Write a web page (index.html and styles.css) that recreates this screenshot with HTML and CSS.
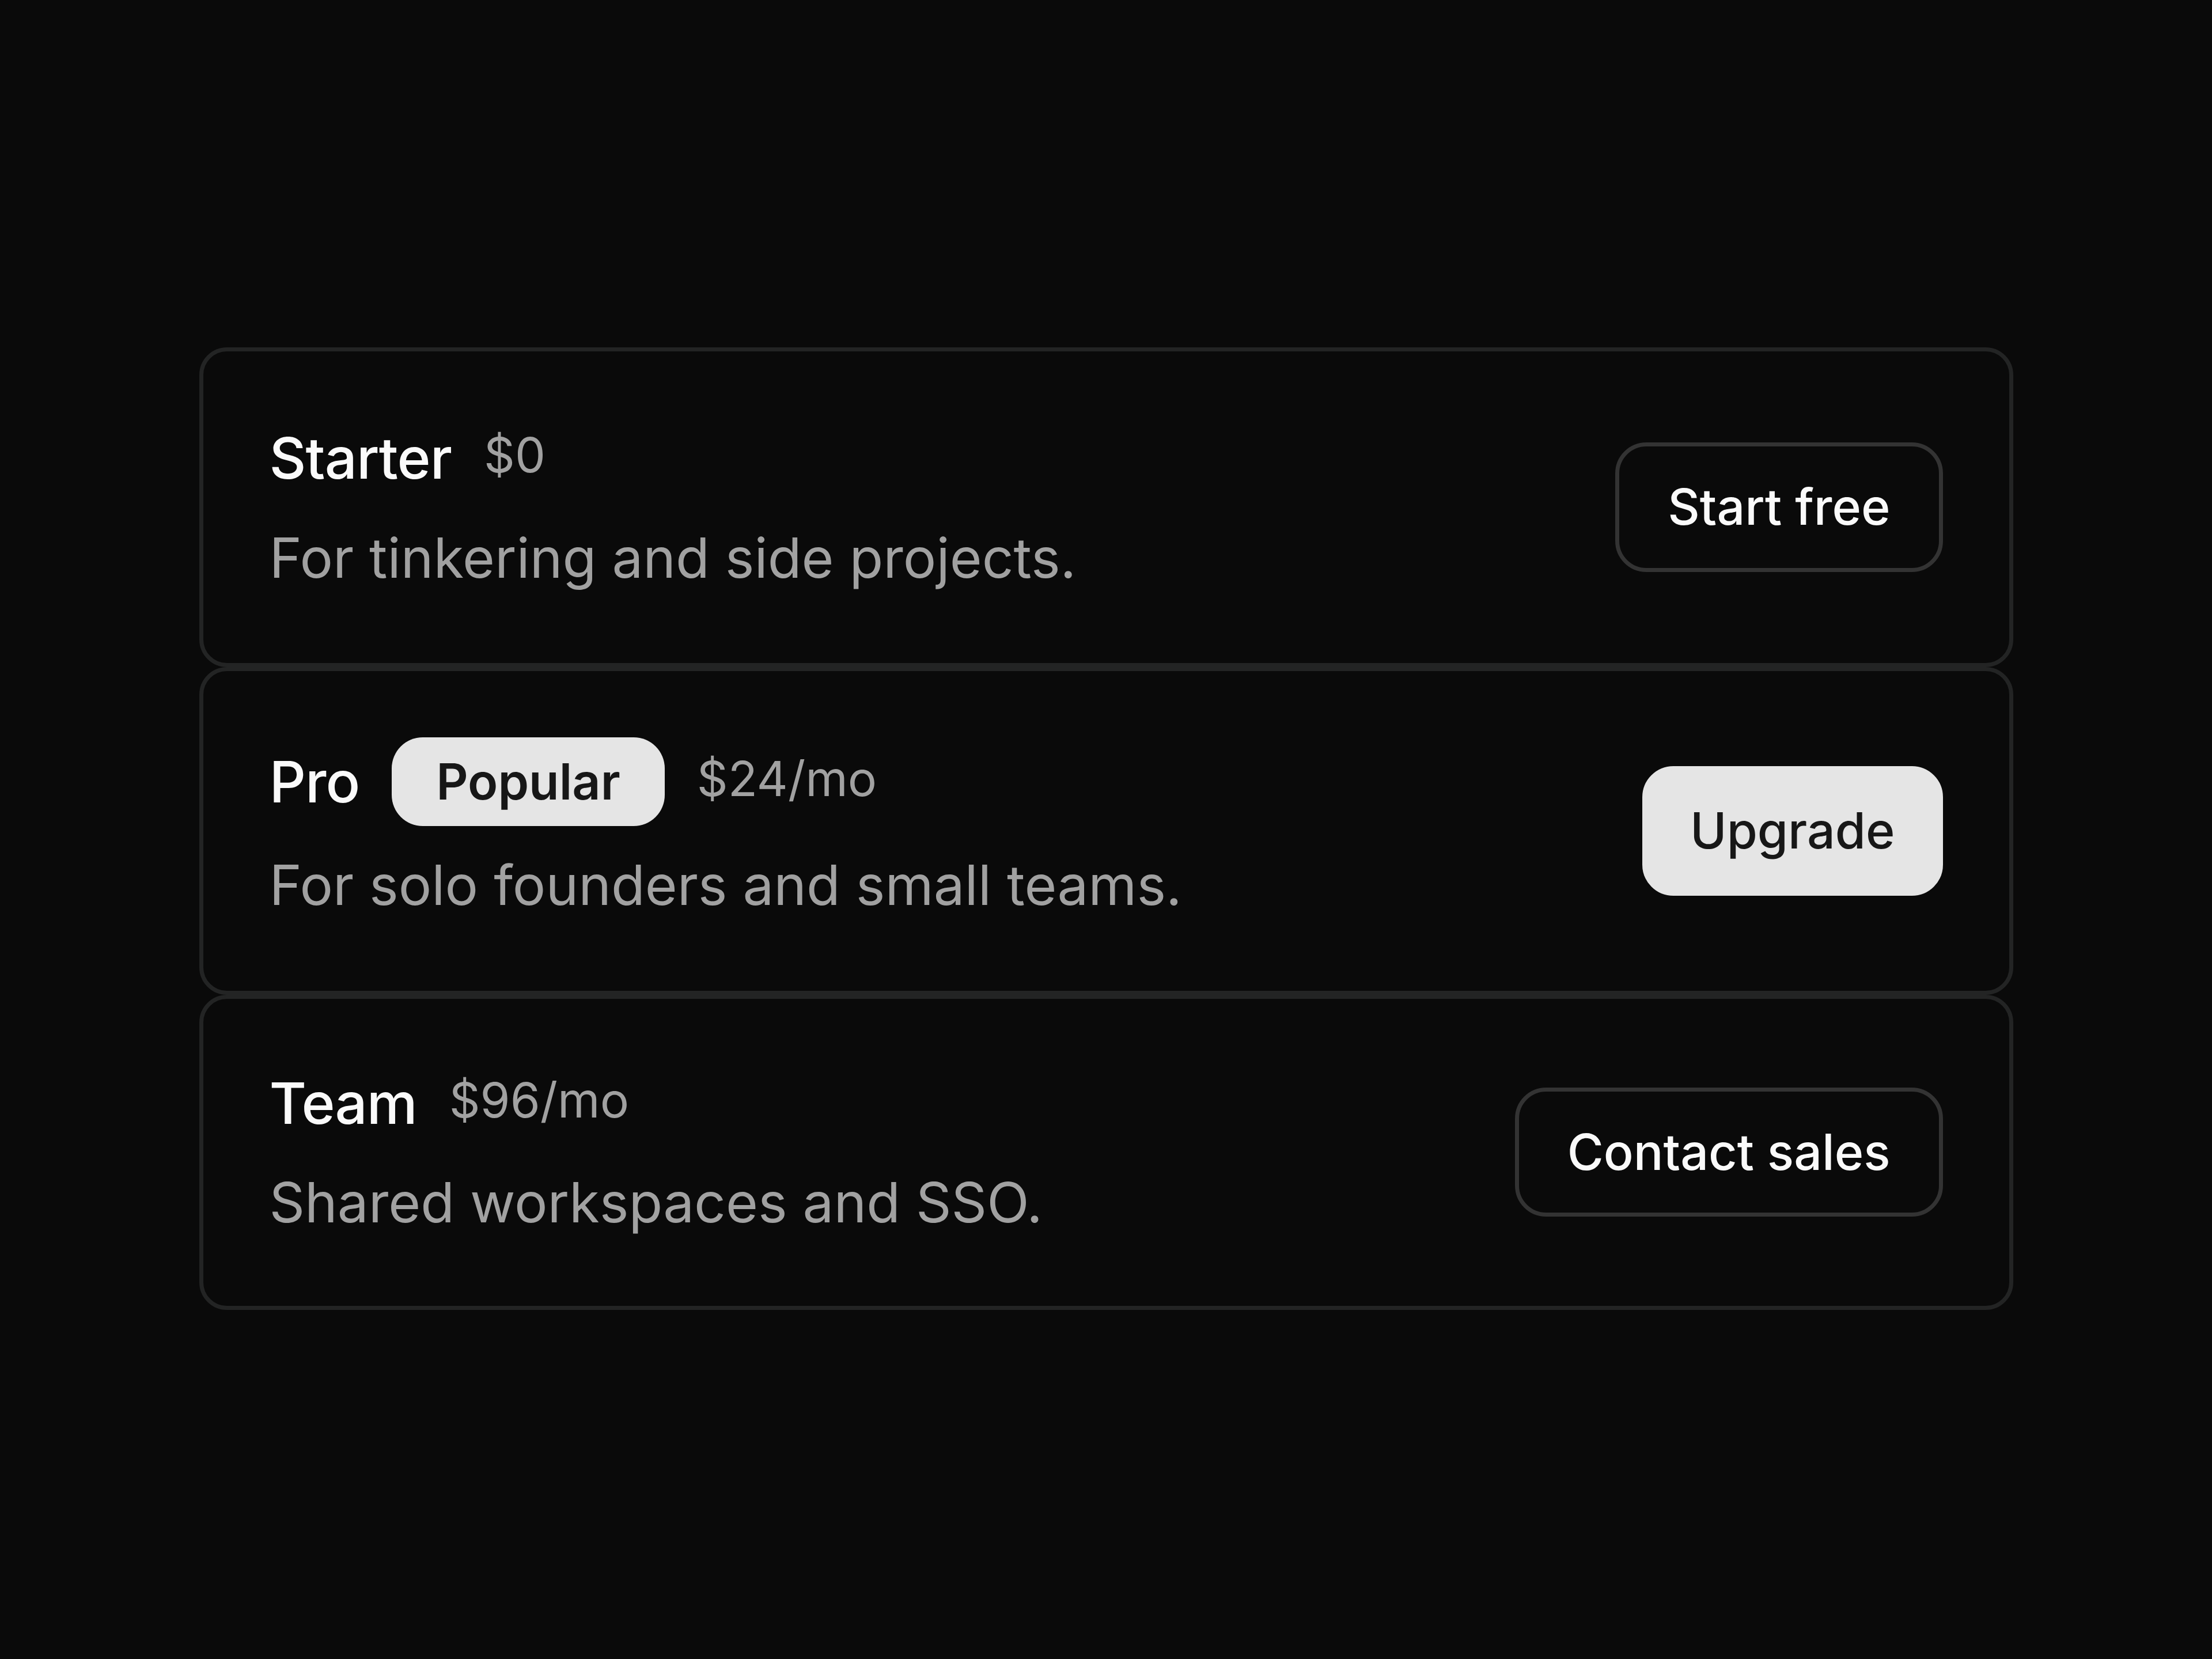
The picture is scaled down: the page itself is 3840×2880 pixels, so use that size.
FILE: index.html
```html
<!DOCTYPE html>
<html lang="en">
<head>
<meta charset="utf-8">
<title>Plans</title>
<link rel="stylesheet" href="styles.css">
</head>
<body>
<main class="plans">
  <section class="plan">
    <div class="plan-info">
      <div class="plan-head">
        <h2 class="plan-name">Starter</h2>
        <span class="plan-price">$0</span>
      </div>
      <p class="plan-desc">For tinkering and side projects.</p>
    </div>
    <button class="btn btn-outline" type="button">Start free</button>
  </section>
  <section class="plan">
    <div class="plan-info">
      <div class="plan-head">
        <h2 class="plan-name">Pro</h2>
        <span class="badge">Popular</span>
        <span class="plan-price">$24/mo</span>
      </div>
      <p class="plan-desc">For solo founders and small teams.</p>
    </div>
    <button class="btn btn-solid" type="button">Upgrade</button>
  </section>
  <section class="plan">
    <div class="plan-info">
      <div class="plan-head">
        <h2 class="plan-name">Team</h2>
        <span class="plan-price">$96/mo</span>
      </div>
      <p class="plan-desc">Shared workspaces and SSO.</p>
    </div>
    <button class="btn btn-outline" type="button">Contact sales</button>
  </section>
</main>
</body>
</html>
```

FILE: styles.css
```css
html, body {
  margin: 0;
  padding: 0;
}

body {
  background: #0a0a0a;
  min-height: 2880px;
  font-family: Inter, "Liberation Sans", sans-serif;
  color: #fafafa;
}

.plans {
  width: 3149px;
  margin: 603px auto 0;
  display: flex;
  flex-direction: column;
}

.plan {
  display: flex;
  align-items: center;
  justify-content: space-between;
  padding: 115px;
  border: 7px solid #232424;
  border-radius: 48px;
  background: #0a0a0a;
}

.plan:last-child {
  padding-top: 111px;
  padding-bottom: 111px;
}

.plan-info {
  display: flex;
  flex-direction: column;
}

.plan-head {
  display: flex;
  align-items: center;
  gap: 56px;
}

.plan-name {
  margin: 0;
  font-size: 99px;
  font-weight: 500;
  letter-spacing: -0.01em;
  line-height: 1.42;
  color: #fafafa;
}

.plan-price {
  font-size: 84px;
  font-weight: 400;
  line-height: 1.4;
  padding-bottom: 10px;
  color: #a1a1a1;
}

.plan-desc {
  margin: 35px 0 0;
  font-size: 96px;
  font-weight: 400;
  line-height: 1.41;
  color: #a1a1a1;
}

.badge {
  background: #e5e5e5;
  color: #171717;
  font-size: 86px;
  font-weight: 600;
  line-height: 1.4;
  padding: 17px 77px;
  border-radius: 54px;
}

.btn {
  font-family: Inter, "Liberation Sans", sans-serif;
  font-size: 86px;
  font-weight: 500;
  line-height: 1.4;
  padding: 45px 84px;
  border: 7px solid #333333;
  border-radius: 54px;
  background: transparent;
  color: #fafafa;
  cursor: pointer;
}

.btn-solid {
  padding-left: 76px;
  padding-right: 76px;
  background: #e5e5e5;
  border-color: #e5e5e5;
  color: #171717;
}
```
